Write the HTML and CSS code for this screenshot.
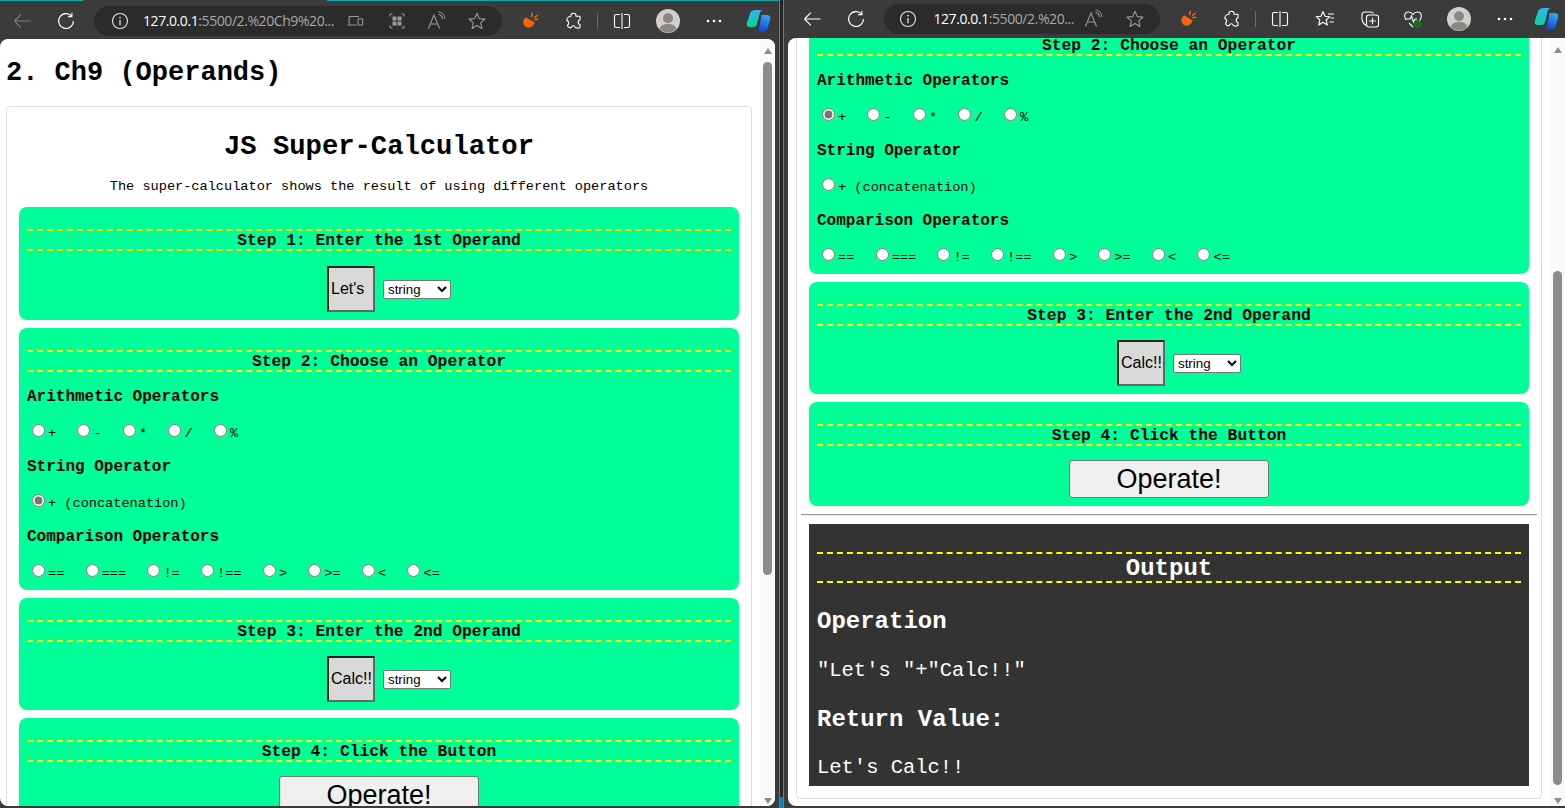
FILE: index.html
```html
<!DOCTYPE html>
<html lang="en">
<head>
<meta charset="utf-8">
<title>JS Super-Calculator</title>
<link rel="stylesheet" href="styles.css">
</head>
<body>
<svg class="defs" width="0" height="0" aria-hidden="true">
  <defs>
    <linearGradient id="cpA" x1="0.6" y1="0" x2="0.3" y2="1"><stop offset="0" stop-color="#2fb4f0"/><stop offset="1" stop-color="#0ad39a"/></linearGradient>
    <linearGradient id="cpB" x1="0.7" y1="0" x2="0.3" y2="1"><stop offset="0" stop-color="#2fa8f2"/><stop offset="1" stop-color="#0f3fd6"/></linearGradient>
    <symbol id="i-back" viewBox="0 0 20 20"><path d="M2.500 10H18.500M2.500 10L8.800 3.700M2.500 10L8.800 16.300" fill="none" stroke="currentColor" stroke-width="1.100"/></symbol>
    <symbol id="i-refresh" viewBox="0 0 20 20"><path d="M15.600 5.200A7.400 7.400 0 1 0 17.400 10M15.900 1.800V5.600H12.100" fill="none" stroke="currentColor" stroke-width="1.100"/></symbol>
    <symbol id="i-info" viewBox="0 0 20 20"><circle cx="10" cy="10" r="7.500" fill="none" stroke="currentColor" stroke-width="1.100"/><path d="M10 9V14.200" stroke="currentColor" stroke-width="1.300"/><circle cx="10" cy="6.600" r=".9" fill="currentColor"/></symbol>
    <symbol id="i-device" viewBox="0 0 20 20"><path d="M3.500 13.500V5H14.500M1.500 14.500H12" fill="none" stroke="currentColor" stroke-width="1.200"/><rect x="13.500" y="7.500" width="5" height="7" rx=".8" fill="none" stroke="currentColor" stroke-width="1.200"/></symbol>
    <symbol id="i-grid" viewBox="0 0 20 20"><path d="M3 5.500V3.500A.5.5 0 0 1 3.500 3H5.500M14.500 3H16.500A.5.5 0 0 1 17 3.500V5.500M17 14.500V16.500A.5.5 0 0 1 16.500 17H14.500M5.500 17H3.500A.5.5 0 0 1 3 16.500V14.500" fill="none" stroke="currentColor" stroke-width="1.100"/><rect x="5.500" y="5.500" width="4" height="4" fill="currentColor"/><rect x="10.500" y="5.500" width="4" height="4" fill="currentColor"/><rect x="5.500" y="10.500" width="4" height="4" fill="currentColor"/><rect x="10.500" y="10.500" width="4" height="4" fill="currentColor"/></symbol>
    <symbol id="i-read" viewBox="0 0 20 20"><path d="M1.500 17.500L7 4L12.500 17.500M3.400 13H10.600M11.500 3.200A5.200 5.200 0 0 1 15.500 8M11.500 .8A7.800 7.800 0 0 1 18 8" fill="none" stroke="currentColor" stroke-width="1.100"/></symbol>
    <symbol id="i-star" viewBox="0 0 20 20"><path d="M10 2.300L12.300 7.600L18 8.100L13.700 11.900L15 17.500L10 14.600L5 17.500L6.300 11.900L2 8.100L7.700 7.600Z" fill="none" stroke="currentColor" stroke-width="1.100" stroke-linejoin="round"/></symbol>
    <symbol id="i-shell" viewBox="0 0 20 20"><path d="M6.500 6.500L14.500 11.500C14 14.500 11 17 8 16.700C5 16.300 3 13.500 3.300 10.500C3.400 8.800 4.800 7 6.500 6.500Z" fill="#f7630c"/><path d="M12.300 2.500L11.500 5.500M17 4.600L14.600 6.300M17.500 8.300L14.800 8.800" stroke="#f7630c" stroke-width="1.600" stroke-linecap="round"/></symbol>
    <symbol id="i-puzzle" viewBox="0 0 20 20"><path d="M7 4.500C7 1.500 12 1.500 12 4.500V5.200H16V9C13.600 9 13.600 13.500 16 13.500V16.500C14 17.500 12.200 17.200 11 16.200C11 14.200 7.500 14.200 7 16.800C5 17 3.800 16 3.400 14.200C5.200 13.500 5.200 9.800 2.800 9.600C2.800 7.200 4.500 5.200 7 5.200Z" fill="none" stroke="currentColor" stroke-width="1.100" stroke-linejoin="round"/></symbol>
    <symbol id="i-split" viewBox="0 0 20 20"><path d="M8 3.500H4A1.500 1.500 0 0 0 2.500 5V15A1.500 1.500 0 0 0 4 16.500H8M12 3.500H16A1.500 1.500 0 0 1 17.500 5V15A1.500 1.500 0 0 1 16 16.500H12M10 2V18" fill="none" stroke="currentColor" stroke-width="1.100"/></symbol>
    <symbol id="i-avatar" viewBox="0 0 24 24"><circle cx="12" cy="12" r="12" fill="#d2cfca"/><circle cx="12" cy="9.300" r="5" fill="#8a8886"/><path d="M3.600 20C5 15.800 8 15 12 15S19 15.800 20.400 20A12 12 0 0 1 3.600 20Z" fill="#8a8886"/></symbol>
    <symbol id="i-dots" viewBox="0 0 20 20"><circle cx="4" cy="10" r="1.300" fill="currentColor"/><circle cx="10" cy="10" r="1.300" fill="currentColor"/><circle cx="16" cy="10" r="1.300" fill="currentColor"/></symbol>
    <symbol id="i-copilot" viewBox="0 0 24 24"><path d="M9 1H17C14.500 1 13.500 3 13 5L10.500 15C10 17 8.500 18 7 18H3C.8 18 -.4 16 .3 14L3.500 4.500C4.200 2.500 6 1 9 1Z" fill="url(#cpA)"/><path d="M15 6H20.500C23 6 24.300 8 23.700 10L21 19.500C20.300 21.800 18.500 23 16 23H8C10.500 23 12 21.500 12.600 19.500L14.500 9C14.700 7.500 14.500 6.500 15 6Z" fill="url(#cpB)"/></symbol>
    <symbol id="i-favs" viewBox="0 0 20 20"><path d="M8 2.500L10 7.300L14.800 7.700L11.200 11L12.300 16L8 13.300L3.700 16L4.800 11L1.200 7.700L6 7.300Z" fill="none" stroke="currentColor" stroke-width="1.100" stroke-linejoin="round"/><path d="M13 5H19M15.500 9H19M14.500 13H19" stroke="currentColor" stroke-width="1.100"/></symbol>
    <symbol id="i-coll" viewBox="0 0 20 20"><path d="M6 16.500C3 15 1.500 11 2 6C2 4.500 3 3 5 3H11C12 3 13 3.500 13.500 4.500" fill="none" stroke="currentColor" stroke-width="1.100"/><rect x="6.500" y="6" width="12" height="12" rx="2.500" fill="none" stroke="currentColor" stroke-width="1.100"/><path d="M12.500 8.700V15.300M9.200 12H15.800" stroke="currentColor" stroke-width="1.100"/></symbol>
    <symbol id="i-heart" viewBox="0 0 20 20"><path d="M3 11C.5 7.500 1.500 3 5.500 3C7.500 3 9 4 10 5.500C11 4 12.500 3 14.500 3C18.500 3 19.500 7.500 17 11L15 13.500M3 10H7L8.500 7L10.500 13L12 10H14M6 14L10 18" fill="none" stroke="currentColor" stroke-width="1.100"/><circle cx="14.500" cy="15" r="3.800" fill="#0f7b0f"/><path d="M12.800 15L14 16.300L16.200 13.900" fill="none" stroke="#3b3b3b" stroke-width=".9"/></symbol>
  </defs>
</svg>

<main class="desktop">
  <section class="window window-left">
    <header class="toolbar toolbar-left">
      <span class="slot dim"><svg class="icon"><use href="#i-back"/></svg></span>
      <span class="slot"><svg class="icon"><use href="#i-refresh"/></svg></span>
      <div class="pill pill-left">
        <span class="pill-info"><svg class="icon"><use href="#i-info"/></svg></span>
        <span class="url"><b>127.0.0.1</b>:5500/2.%20Ch9%20...</span>
        <span class="pill-slot"><svg class="icon small"><use href="#i-device"/></svg></span>
        <span class="pill-slot"><svg class="icon"><use href="#i-grid"/></svg></span>
        <span class="pill-slot"><svg class="icon"><use href="#i-read"/></svg></span>
        <span class="pill-slot"><svg class="icon"><use href="#i-star"/></svg></span>
      </div>
      <span class="slot"><svg class="icon"><use href="#i-shell"/></svg></span>
      <span class="slot"><svg class="icon"><use href="#i-puzzle"/></svg></span>
      <span class="bar"></span>
      <span class="slot"><svg class="icon"><use href="#i-split"/></svg></span>
      <span class="slot nudge-2"><svg class="avatar"><use href="#i-avatar"/></svg></span>
      <span class="slot nudge-2"><svg class="icon"><use href="#i-dots"/></svg></span>
      <span class="slot"><svg class="copilot"><use href="#i-copilot"/></svg></span>
    </header>
    <div class="viewport viewport-left">
      <div class="page">
        <div class="page-inner">
          <h1 class="page-title">2. Ch9 (Operands)</h1>
          <article class="card">
            <h2 class="card-title">JS Super-Calculator</h2>
            <p class="card-desc">The super-calculator shows the result of using different operators</p>
            <section class="step">
              <h3 class="step-head">Step 1: Enter the 1st Operand</h3>
              <div class="operand"><input class="operand-input" type="text" value="Let's"> <select class="operand-type"><option>string</option><option>number</option></select></div>
            </section>
            <section class="step">
              <h3 class="step-head">Step 2: Choose an Operator</h3>
              <h4 class="group">Arithmetic Operators</h4>
              <p class="ops"><input type="radio" name="l"><label>+&nbsp; </label><input type="radio" name="l"><label>-&nbsp; </label><input type="radio" name="l"><label>*&nbsp; </label><input type="radio" name="l"><label>/&nbsp; </label><input type="radio" name="l"><label>%</label></p>
              <h4 class="group">String Operator</h4>
              <p class="ops"><input type="radio" name="l" checked><label>+ (concatenation)</label></p>
              <h4 class="group">Comparison Operators</h4>
              <p class="ops"><input type="radio" name="l"><label>==&nbsp; </label><input type="radio" name="l"><label>===&nbsp; </label><input type="radio" name="l"><label>!=&nbsp; </label><input type="radio" name="l"><label>!==&nbsp; </label><input type="radio" name="l"><label>&gt;&nbsp; </label><input type="radio" name="l"><label>&gt;=&nbsp; </label><input type="radio" name="l"><label>&lt;&nbsp; </label><input type="radio" name="l"><label>&lt;=</label></p>
            </section>
            <section class="step">
              <h3 class="step-head">Step 3: Enter the 2nd Operand</h3>
              <div class="operand"><input class="operand-input" type="text" value="Calc!!"> <select class="operand-type"><option>string</option><option>number</option></select></div>
            </section>
            <section class="step">
              <h3 class="step-head">Step 4: Click the Button</h3>
              <div class="action"><button class="operate" type="button">Operate!</button></div>
            </section>
          </article>
        </div>
      </div>
      <div class="scrollbar">
        <span class="arrow-up"></span>
        <div class="track track-left"><span class="thumb"></span></div>
        <span class="arrow-down"></span>
      </div>
    </div>
  </section>

  <section class="window window-right">
    <header class="toolbar toolbar-right">
      <span class="slot"><svg class="icon"><use href="#i-back"/></svg></span>
      <span class="slot"><svg class="icon"><use href="#i-refresh"/></svg></span>
      <div class="pill pill-right">
        <span class="pill-info"><svg class="icon"><use href="#i-info"/></svg></span>
        <span class="url"><b>127.0.0.1</b>:5500/2.%20...</span>
        <span class="pill-slot"><svg class="icon"><use href="#i-read"/></svg></span>
        <span class="pill-slot"><svg class="icon"><use href="#i-star"/></svg></span>
      </div>
      <span class="slot"><svg class="icon"><use href="#i-shell"/></svg></span>
      <span class="slot"><svg class="icon"><use href="#i-puzzle"/></svg></span>
      <span class="bar"></span>
      <span class="slot"><svg class="icon"><use href="#i-split"/></svg></span>
      <span class="slot nudge-1"><svg class="icon"><use href="#i-favs"/></svg></span>
      <span class="slot nudge-1"><svg class="icon"><use href="#i-coll"/></svg></span>
      <span class="slot nudge-back"><svg class="icon"><use href="#i-heart"/></svg></span>
      <span class="slot nudge-2"><svg class="avatar"><use href="#i-avatar"/></svg></span>
      <span class="slot nudge-2"><svg class="icon"><use href="#i-dots"/></svg></span>
      <span class="slot nudge-back-more"><svg class="copilot"><use href="#i-copilot"/></svg></span>
    </header>
    <div class="viewport viewport-right">
      <div class="page">
        <div class="page-inner scrolled">
          <h1 class="page-title">2. Ch9 (Operands)</h1>
          <article class="card">
            <h2 class="card-title">JS Super-Calculator</h2>
            <p class="card-desc">The super-calculator shows the result of using different operators</p>
            <section class="step">
              <h3 class="step-head">Step 1: Enter the 1st Operand</h3>
              <div class="operand"><input class="operand-input" type="text" value="Let's"> <select class="operand-type"><option>string</option><option>number</option></select></div>
            </section>
            <section class="step">
              <h3 class="step-head">Step 2: Choose an Operator</h3>
              <h4 class="group">Arithmetic Operators</h4>
              <p class="ops"><input type="radio" name="r" checked><label>+&nbsp; </label><input type="radio" name="r"><label>-&nbsp; </label><input type="radio" name="r"><label>*&nbsp; </label><input type="radio" name="r"><label>/&nbsp; </label><input type="radio" name="r"><label>%</label></p>
              <h4 class="group">String Operator</h4>
              <p class="ops"><input type="radio" name="r"><label>+ (concatenation)</label></p>
              <h4 class="group">Comparison Operators</h4>
              <p class="ops"><input type="radio" name="r"><label>==&nbsp; </label><input type="radio" name="r"><label>===&nbsp; </label><input type="radio" name="r"><label>!=&nbsp; </label><input type="radio" name="r"><label>!==&nbsp; </label><input type="radio" name="r"><label>&gt;&nbsp; </label><input type="radio" name="r"><label>&gt;=&nbsp; </label><input type="radio" name="r"><label>&lt;&nbsp; </label><input type="radio" name="r"><label>&lt;=</label></p>
            </section>
            <section class="step">
              <h3 class="step-head">Step 3: Enter the 2nd Operand</h3>
              <div class="operand"><input class="operand-input" type="text" value="Calc!!"> <select class="operand-type"><option>string</option><option>number</option></select></div>
            </section>
            <section class="step">
              <h3 class="step-head">Step 4: Click the Button</h3>
              <div class="action"><button class="operate" type="button">Operate!</button></div>
            </section>
            <hr class="rule">
            <section class="output">
              <h3 class="output-head">Output</h3>
              <h4 class="output-label">Operation</h4>
              <p class="output-text">"Let's "+"Calc!!"</p>
              <h4 class="output-label output-label-next">Return Value:</h4>
              <p class="output-text output-text-last">Let's Calc!!</p>
            </section>
          </article>
        </div>
      </div>
      <div class="scrollbar">
        <span class="arrow-up"></span>
        <div class="track track-right"><span class="thumb"></span></div>
        <span class="arrow-down"></span>
      </div>
    </div>
  </section>
</main>
</body>
</html>
```
FILE: styles.css
```css
* { box-sizing: border-box; }
html, body { margin: 0; height: 100%; overflow: hidden; }
body { background: #3b3b3b; font-family: "Liberation Mono", monospace; color: #000; }
.defs { display: block; height: 0; }

.desktop { display: flex; width: 1565px; height: 808px; overflow: hidden; background: linear-gradient(#262626 797px, #0a7fb5 797px); }
.window { display: flex; flex-direction: column; flex: none; height: 808px; background: #3b3b3b; }
.window-left { width: 780px; border-right: 1px solid #0aa6b8; }
.window-right { width: 782px; margin-left: 3px; border-left: 1px solid #0aa6b8; }

/* toolbar */
.toolbar { display: flex; align-items: center; flex: none; color: #fff; }
.toolbar-left {
  height: 39px; padding-top: 2px;
  background: linear-gradient(90deg, #0aa6a8 83px, #3b3b3b 83px, #3b3b3b 327px, #0aa6a8 327px) top / 100% 1px no-repeat #3b3b3b;
}
.toolbar-right { height: 38px; padding-left: 6px; }
.slot { display: flex; align-items: center; justify-content: center; flex: none; width: 44px; height: 32px; }
.nudge-1 { margin-left: 1px; }
.nudge-2 { margin-left: 2px; }
.nudge-back { margin-left: -1px; }
.nudge-back-more { margin-left: -3px; }
.dim { color: #7a7a7a; }
.icon { width: 20px; height: 20px; display: block; }
.icon.small { width: 18px; height: 18px; margin-left: -4px; }
.avatar { width: 24px; height: 24px; display: block; }
.copilot { width: 25px; height: 24px; display: block; }
.bar { flex: none; width: 1px; height: 16px; margin: 0 2px 0 1px; background: #6b6b6b; }
.pill { display: flex; align-items: center; flex: none; height: 30px; margin: 0 6px; border-radius: 15px; background: #2b2b2b; color: #bdbdbd; }
.pill-left { width: 408px; }
.pill-right { width: 276px; }
.pill-info { display: flex; justify-content: center; width: 52px; color: #e4e4e4; }
.url { flex: 1; font: 14px/20px "Open Sans", "Noto Sans", sans-serif; letter-spacing: -.42px; color: #a8a8a8; white-space: nowrap; margin-left: -3px; }
.pill-right .url { margin-left: 2px; }
.url b { font-weight: 400; color: #fff; }
.pill-slot { display: flex; justify-content: center; flex: none; width: 40px; color: #9a9a9a; }
.pill-left .pill-slot:last-child { margin-right: 5px; }
.pill-right .pill-slot:last-child { margin-right: 5px; }
.pill-right .pill-slot:nth-last-child(2) { margin-right: 1px; }

/* viewport */
.viewport { flex: 1; display: flex; min-height: 0; background: #fff; overflow: hidden; }
.viewport-left { margin: 0 4px 2px 0; border-radius: 8px; }
.viewport-right { margin: 0 0 2px 4px; border-radius: 8px 0 0 8px; }
.page { flex: none; width: 760px; overflow: hidden; }
.viewport-right .page { width: 762px; }
.viewport-left .page-inner { margin-left: -2px; }
.page-inner { width: 762px; padding: 0 8px; }
.scrolled { margin-top: -315px; }

/* scrollbar */
.scrollbar { flex: 1; display: flex; flex-direction: column; align-items: center; background: #fafafa; }
.track { flex: 1; width: 100%; display: flex; flex-direction: column; align-items: center; }
.thumb { display: block; width: 9px; background: #8c8c8c; border-radius: 5px; }
.track-left .thumb { height: 513px; margin-right: 1px; }
.track-right { padding-top: 210px; }
.track-right .thumb { height: 514px; }
.arrow-up, .arrow-down { display: block; width: 0; height: 0; border-left: 4.5px solid transparent; border-right: 4.5px solid transparent; flex: none; }
.arrow-up { margin-top: 9px; border-bottom: 6px solid #8c8c8c; margin-bottom: 8px; }
.arrow-down { margin-bottom: 2px; border-top: 6px solid #8c8c8c; }

/* page */
.page-title { margin: 19px 0 17px; font: bold 27px/31px "Liberation Mono", monospace; }
.card { border: 1px solid #ddd; border-radius: 4px; padding: 24px 12px 12px; background: #fff; }
.card-title { margin: 0 0 17px; font: bold 27.2px/31px "Liberation Mono", monospace; text-align: center; }
.card-desc { margin: 0 0 12px; font: 13.6px/16px "Liberation Mono", monospace; text-align: center; }

.step { background: #00ff99; border-radius: 8px; padding: 22px 8px 8px; margin-bottom: 8px; }
.step-head { margin: 0 0 14.6px; padding: 2px 0 0; border-top: 2px dashed #ffff00; border-bottom: 2px dashed #ffff00; font: bold 16.3px/16px "Liberation Mono", monospace; text-align: center; }
.step-head + .group { margin-top: 15.4px; }
.group { margin: 0; padding-top: 2px; font: bold 16px/16px "Liberation Mono", monospace; }
.ops { margin: 16px 0 16px; height: 20px; font: 13.6px/20px "Liberation Mono", monospace; white-space: nowrap; }
.ops:last-child { margin-bottom: .6px; }
.ops input { accent-color: #767676; }

.operand { font: 13.33px/18px "Liberation Mono", monospace; text-align: center; }
.operand-input { width: 48px; height: 46px; margin-left: 20px; padding: 1px 2px; border: 2px solid; border-color: #222 #666 #666 #222; background: #d9d9d9; font: 16px "Liberation Sans", sans-serif; color: #000; }
.operand-type { width: 68px; height: 19px; font: 13.33px "Liberation Sans", sans-serif; background: #fff; border: 1px solid #767676; border-radius: 2px; color: #000; }
.action { margin-top: -.4px; text-align: center; }
.operate { width: 200px; height: 38px; padding: 0; background: #efefef; border: 1px solid #767676; border-radius: 3px; font: 27px/34px "Liberation Sans", sans-serif; color: #000; }

.rule { margin: 8px -8px 8px; height: 2px; border: 0; border-top: 1px solid #9a9a9a; border-bottom: 1px solid #eee; }
.output { background: #333; color: #fff; padding: 28px 8px 6px; }
.output-head { margin: 0; padding-top: 2px; border-top: 2px dashed #ffff00; border-bottom: 2px dashed #ffff00; font: bold 24px/25px "Liberation Mono", monospace; text-align: center; }
.output-label { margin: 25px 0 0; font: bold 24px/27px "Liberation Mono", monospace; }
.output-label-next { margin-top: 23px; }
.output-text { margin: 24px 0 0; font: 20.48px/24px "Liberation Mono", monospace; }
.output-text-last { margin-top: 23px; }
```
